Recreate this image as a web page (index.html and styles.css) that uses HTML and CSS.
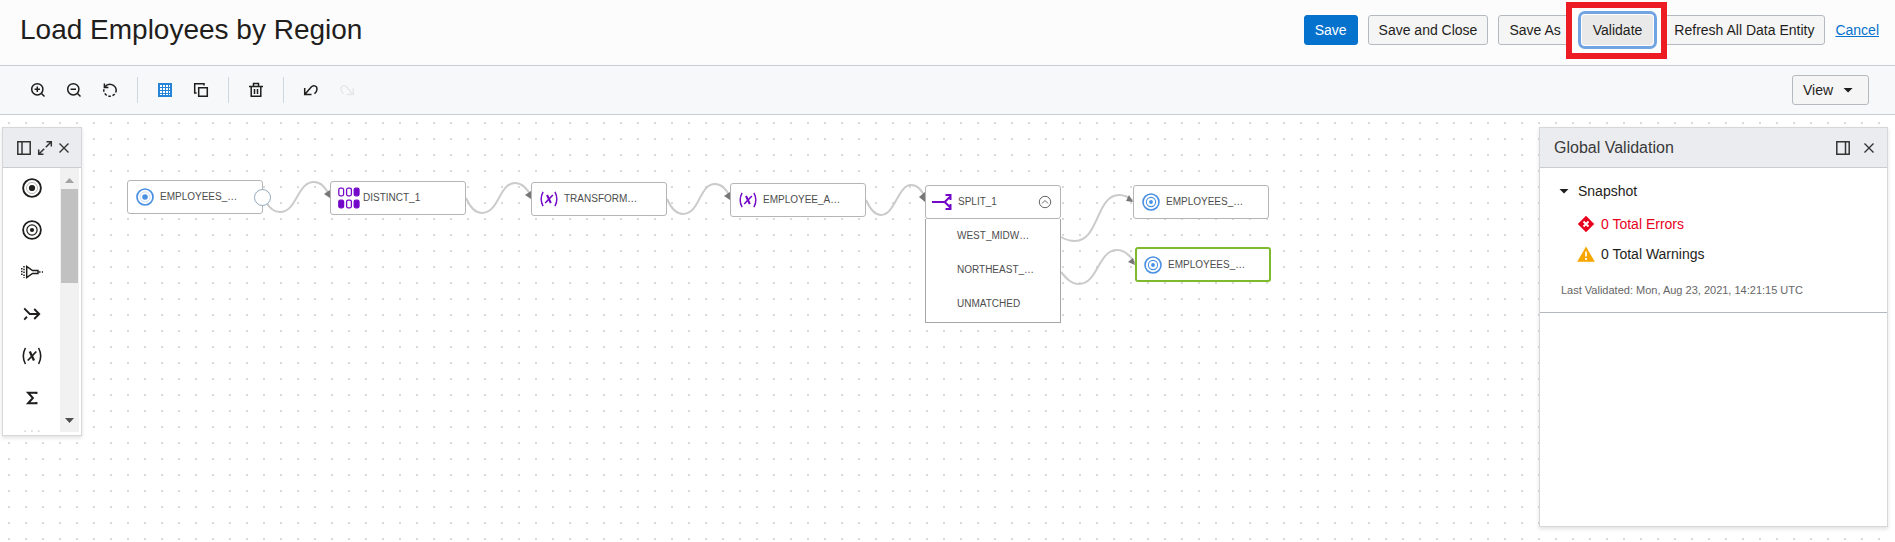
FILE: index.html
```html
<!DOCTYPE html>
<html lang="en">
<head>
<meta charset="utf-8">
<title>Load Employees by Region</title>
<link rel="stylesheet" href="styles.css">
</head>
<body>
<svg class="defs" aria-hidden="true">
  <symbol id="i-source" viewBox="0 0 18 18"><circle cx="9" cy="9" r="8" fill="none" stroke="currentColor" stroke-width="1.7"/><circle cx="9" cy="9" r="5" fill="none" stroke="currentColor" stroke-width=".7" opacity=".4"/><circle cx="9" cy="9" r="2.8" fill="currentColor"/></symbol>
  <symbol id="i-target" viewBox="0 0 18 18"><circle cx="9" cy="9" r="8" fill="none" stroke="currentColor" stroke-width="1.6"/><circle cx="9" cy="9" r="4.6" fill="none" stroke="currentColor" stroke-width="1.1"/><circle cx="9" cy="9" r="1.9" fill="currentColor"/></symbol>
  <symbol id="i-expr" viewBox="0 0 20 18"><g fill="none" stroke="currentColor"><path stroke-width="1.6" d="M3.400 1Q-.8 9 3.400 17M16.600 1Q20.800 9 16.600 17"/><path stroke-width="2.300" d="M7.800 4.500L12 13.500"/><path stroke-width="1.800" d="M14.300 4.500L5.800 13.500"/></g></symbol>
  <symbol id="i-close" viewBox="0 0 16 16"><path d="M3.500 3.500l9 9M12.500 3.500l-9 9" fill="none" stroke="currentColor" stroke-width="1.4"/></symbol>
</svg>

<header class="header">
  <h1 class="title">Load Employees by Region</h1>
  <div class="actions">
    <button class="btn primary" type="button">Save</button>
    <button class="btn" type="button">Save and Close</button>
    <button class="btn" type="button">Save As</button>
    <button class="btn focused" type="button">Validate</button>
    <button class="btn" type="button">Refresh All Data Entity</button>
    <a class="cancel" href="#">Cancel</a>
  </div>
</header>

<div class="toolbar" role="toolbar" aria-label="Designer tools">
  <div class="tools">
    <button class="tool" type="button" aria-label="Zoom in"><svg viewBox="0 0 16 16"><circle cx="7.3" cy="7.3" r="5.6"/><path d="M11.5 11.5l3 3M4.6 7.3h5.4M7.3 4.6v5.4"/></svg></button>
    <button class="tool" type="button" aria-label="Zoom out"><svg viewBox="0 0 16 16"><circle cx="7.3" cy="7.3" r="5.6"/><path d="M11.5 11.5l3 3M4.6 7.3h5.4"/></svg></button>
    <button class="tool" type="button" aria-label="Reset zoom"><svg viewBox="0 0 16 16"><path d="M3 5A6.2 6.2 0 0 1 14.2 8M2.4 1.4v4h4"/><path stroke-dasharray="2.6 1.7" d="M14.2 8A6.2 6.2 0 0 1 1.8 8V7"/></svg></button>
    <span class="divider"></span>
    <button class="tool active" type="button" aria-label="Grid"><svg viewBox="0 0 16 16"><path fill="#fff" stroke-width="2" d="M2 2h12v12H2z"/><path stroke-width="1" d="M5.500 2v12M8.500 2v12M11.500 2v12M2 5.500h12M2 8.500h12M2 11.500h12"/></svg></button>
    <button class="tool" type="button" aria-label="Copy"><svg viewBox="0 0 16 16"><path d="M5.7 5.7h8.6v8.6H5.7zM3.6 11H1.7V1.7H11v1.9"/></svg></button>
    <span class="divider"></span>
    <button class="tool" type="button" aria-label="Delete"><svg viewBox="0 0 16 16"><path d="M1 4.5h14M5.5 4.5v-3h5v3M3.2 4.5v9.8h9.6V4.5M6.5 7v5M9.5 7v5"/></svg></button>
    <span class="divider"></span>
    <button class="tool" type="button" aria-label="Undo"><svg viewBox="0 0 16 16"><path d="M1.700 6v6.500H8.500M2 12.200L8 5.300C10 3 14 3.200 14 7.200C14 9.200 13 10.300 11.500 11.800"/></svg></button>
    <button class="tool" type="button" aria-label="Redo" disabled><svg viewBox="0 0 16 16"><path d="M14.300 6v6.500H7.500M14 12.200L8 5.300C6 3 2 3.200 2 7.200C2 9.200 3 10.300 4.500 11.800"/></svg></button>
  </div>
  <button class="btn view" type="button">View <span class="caret"></span></button>
</div>

<main class="canvas">
  <svg class="edges" aria-hidden="true">
    <g class="wires">
      <path d="M266 87C270 94 275 97 280 97C297 97 297 67 314 67C321 67 325 72 329 79"/>
      <path d="M466 83C470 92 475 98 482 98C499 98 499 68 515 68C522 68 526 73 531 80"/>
      <path d="M667 84C671 93 676 99 683 99C700 99 699 69 715 69C722 69 726 74 730 81"/>
      <path d="M866 85C870 94 875 100 881 100C895 100 898 70 911 70C917 70 922 75 925 83"/>
      <path d="M1061 122C1066 125 1071 126 1075 126C1099 126 1096 80 1119 80C1124 80 1129 82 1133 86"/>
      <path d="M1061 157C1066 163 1071 169 1079 169C1098 169 1098 135 1117 135C1124 135 1130 140 1135 148"/>
    </g>
    <g class="heads">
      <path d="M324 79l6-4v8z"/><path d="M525 80l6-4v8z"/><path d="M724 81l6-4v8z"/><path d="M919 82l6-5v10z"/><path d="M1126 86l3-6 4 7z"/><path d="M1128 147l5-4 2 7z"/>
    </g>
  </svg>

  <div class="node n1"><svg class="ico blue"><use href="#i-source"/></svg><span>EMPLOYEES_…</span><i class="port"></i></div>
  <div class="node n2"><svg class="ico wide" viewBox="0 0 22 22"><g fill="none" stroke="currentColor" stroke-width="1.300"><rect x=".8" y="1.200" width="4.800" height="7.600" rx="1.500"/><rect x="8.600" y="1.200" width="4.800" height="7.600" rx="1.500"/><rect x="16.200" y="1.200" width="4.800" height="7.600" rx="1.500" fill="currentColor"/><rect x=".8" y="13.200" width="4.800" height="7.600" rx="1.500" fill="currentColor"/><rect x="8.600" y="13.200" width="4.800" height="7.600" rx="1.500"/><rect x="16.200" y="13.200" width="4.800" height="7.600" rx="1.500" fill="currentColor"/></g></svg><span>DISTINCT_1</span></div>
  <div class="node n3"><svg class="ico"><use href="#i-expr"/></svg><span>TRANSFORM…</span></div>
  <div class="node n4"><svg class="ico"><use href="#i-expr"/></svg><span>EMPLOYEE_A…</span></div>
  <div class="split">
    <div class="node"><svg class="ico split-ico" viewBox="0 0 20 18"><path d="M0 9h11M11 9l2-.2 5-5M11 9l2 .2 5 5M13.500 2h5v5M13.500 16h5v-5" fill="none" stroke="currentColor" stroke-width="2"/></svg><span>SPLIT_1</span>
      <button class="collapse" type="button" aria-label="Collapse"><svg viewBox="0 0 14 14"><circle cx="7" cy="7" r="5.700"/><path d="M4 8.500l3-3 3 3"/></svg></button></div>
    <ul class="outputs"><li>WEST_MIDW…</li><li>NORTHEAST_…</li><li>UNMATCHED</li></ul>
  </div>
  <div class="node n6"><svg class="ico blue"><use href="#i-target"/></svg><span>EMPLOYEES_…</span></div>
  <div class="node n7 selected"><svg class="ico blue"><use href="#i-target"/></svg><span>EMPLOYEES_…</span></div>

  <aside class="panel palette" aria-label="Operators">
    <div class="panel-head">
      <button class="icon-btn" type="button" aria-label="Dock left"><svg viewBox="0 0 16 16"><path d="M1.800 1.800h12.400v12.400H1.800zM6 2v12"/></svg></button>
      <button class="icon-btn" type="button" aria-label="Expand"><svg viewBox="0 0 16 16"><path d="M9.500 1.700h4.800v4.800M14 2L8.800 7.200M6.500 14.300H1.700V9.500M2 14l5.200-5.200"/></svg></button>
      <button class="icon-btn" type="button" aria-label="Close"><svg><use href="#i-close"/></svg></button>
    </div>
    <div class="palette-body">
      <ul class="operators">
        <li><svg><use href="#i-source"/></svg></li>
        <li><svg><use href="#i-target"/></svg></li>
        <li><svg class="op-wide" viewBox="0 0 22 18"><g fill="none" stroke="currentColor" stroke-width="1.500"><path d="M5.700 3.500v11L11.500 10.500h5.500V7.500H11.500z"/><path stroke-dasharray="1.500 1.300" d="M3 3v12M.8 5v8M18 9h4"/></g></svg></li>
        <li><svg viewBox="0 0 18 18"><path d="M2 4l5 5h8M2 14l2.500-2.500M11 4.500L15.500 9 11 13.500" fill="none" stroke="currentColor" stroke-width="1.700"/></svg></li>
        <li><svg><use href="#i-expr"/></svg></li>
        <li><svg viewBox="0 0 18 18"><path d="M13 5.500V4.300H5.500L9.800 9l-4.300 4.700H13v-1.200" fill="none" stroke="currentColor" stroke-width="1.800"/></svg></li>
        <li><svg viewBox="0 0 18 18"><path d="M2 1h14" fill="none" stroke="#ccc" stroke-width="1" stroke-dasharray="1.500 4.700"/></svg></li>
      </ul>
      <div class="scrollbar"><i class="up"></i><i class="thumb"></i><i class="down"></i></div>
    </div>
  </aside>

  <aside class="panel validation" aria-labelledby="gv">
    <div class="panel-head">
      <h2 id="gv">Global Validation</h2>
      <button class="icon-btn" type="button" aria-label="Dock right"><svg viewBox="0 0 16 16"><path d="M1.800 1.800h12.400v12.400H1.800zM10.500 2v12"/></svg></button>
      <button class="icon-btn" type="button" aria-label="Close"><svg><use href="#i-close"/></svg></button>
    </div>
    <section class="summary">
      <button class="snapshot" type="button"><span class="caret"></span>Snapshot</button>
      <p class="result errors"><svg viewBox="0 0 18 18"><path fill="#e8001d" d="M9 .8L17.200 9 9 17.200.8 9z"/><path d="M6.500 6.500l5 5M11.500 6.500l-5 5" stroke="#fff" stroke-width="1.800"/></svg>0 Total Errors</p>
      <p class="result"><svg viewBox="0 0 18 18"><path fill="#f7a600" d="M9 1.500L17.800 16.800H.2z"/><path d="M9 6.500v5M9 13v2" stroke="#fff" stroke-width="1.700"/></svg>0 Total Warnings</p>
      <p class="stamp">Last Validated: Mon, Aug 23, 2021, 14:21:15 UTC</p>
    </section>
  </aside>
</main>
</body>
</html>
```
FILE: styles.css
```css
* { box-sizing: border-box; }
body {
  margin: 0;
  min-height: 100vh;
  display: flex;
  flex-direction: column;
  font: 14px/20px "Liberation Sans", Arial, sans-serif;
  color: #1f1e1c;
  background: #fff;
}
button { font: inherit; color: inherit; cursor: pointer; }
h1, h2, p, ul { margin: 0; padding: 0; font-weight: 400; list-style: none; }
.defs { position: absolute; width: 0; height: 0; }

.header {
  display: flex;
  align-items: center;
  justify-content: space-between;
  padding: 12px 16px 17px 20px;
  background: #fcfcfc;
  border-bottom: 1px solid #c9cdd2;
}
.title { font-size: 28px; line-height: 36px; }
.actions { display: flex; align-items: center; gap: 10px; }
.btn {
  height: 30px;
  padding: 0 10px;
  border: 1px solid #b5bac0;
  border-radius: 3px;
  background: #f5f5f5;
  white-space: nowrap;
}
.primary { background: #0572ce; border-color: #0572ce; color: #fff; }
.focused {
  position: relative;
  background: #e9e9e9;
  border-color: #e9e9e9;
  box-shadow: 0 0 0 1px #fff, 0 0 0 4px #73a4e2;
}
.focused::after {
  content: "";
  position: absolute;
  inset: -14px -15px -15px -17px;
  border: 6px solid #ed1c24;
}
.cancel { color: #0572ce; }

.toolbar {
  display: flex;
  align-items: center;
  justify-content: space-between;
  padding: 9px 26px 9px 20px;
  background: #f7f8fa;
  border-bottom: 1px solid #c9cdd2;
}
.tools { display: flex; align-items: center; }
.tool {
  display: grid;
  place-items: center;
  width: 36px;
  height: 30px;
  padding: 0;
  border: 0;
  background: none;
}
.tool svg, .icon-btn svg {
  width: 16px;
  height: 16px;
  fill: none;
  stroke: currentColor;
  stroke-width: 1.5;
}
.tool.active { color: #2584d6; }
.tool:disabled { color: #e6e7e9; }
.divider { width: 1px; height: 26px; margin: 0 9px; background: #cfd7de; }
.view { display: flex; align-items: center; gap: 10px; width: 77px; }
.caret {
  width: 10px;
  height: 5px;
  background: #1f1e1c;
  clip-path: polygon(0 0, 100% 0, 50% 100%);
}

.canvas {
  position: relative;
  flex: 1;
  min-height: 360px;
  overflow: hidden;
  background: conic-gradient(from 90deg at 15px 14px, #d9d9d9 90deg, transparent 0) -7px -7px / 17px 16px #fff;
}
.edges { position: absolute; inset: 0; width: 100%; height: 100%; }
.wires { fill: none; stroke: #cbcbcb; stroke-width: 2; }
.heads { fill: #777; }

.node {
  display: flex;
  align-items: center;
  gap: 6px;
  width: 136px;
  height: 34px;
  padding: 0 8px;
  border: 1px solid #b5b5b5;
  border-radius: 3px;
  background: #fff;
  font-size: 10px;
  color: #4d4d4d;
}
.canvas > .node, .split { position: absolute; }
.n1 { left: 127px; top: 65px; }
.n2 { left: 330px; top: 66px; }
.n3 { left: 531px; top: 67px; }
.n4 { left: 730px; top: 68px; }
.split { left: 925px; top: 70px; }
.n6 { left: 1133px; top: 70px; }
.node.n7 { left: 1135px; top: 132px; height: 35px; }
.selected { border: 2px solid #7fb92c; padding: 0 7px; }
.ico { width: 18px; height: 18px; color: #7408c8; }
.ico.blue { color: #4a90e2; }
.ico.wide { width: 22px; height: 22px; margin: 0 -3px 0 -1px; }
.split-ico { width: 20px; margin-left: -2px; }
.port {
  position: absolute;
  right: -9px;
  top: 8px;
  width: 17px;
  height: 17px;
  border: 1px solid #8fa8bd;
  border-radius: 50%;
  background: #fff;
}
.collapse {
  margin-left: auto;
  padding: 0;
  border: 0;
  background: none;
  line-height: 0;
}
.collapse svg { width: 14px; height: 14px; fill: none; stroke: #666; }
.outputs {
  padding: 0 0 1px 31px;
  border: 1px solid #a6a6a6;
  border-top: 0;
  background: #fff;
  font-size: 10px;
  line-height: 34px;
  color: #4d4d4d;
}

.panel {
  position: absolute;
  border: 1px solid #d6d7d9;
  background: #fff;
  box-shadow: 0 2px 4px rgba(0, 0, 0, .12);
}
.panel-head {
  display: flex;
  align-items: center;
  height: 40px;
  background: #ebecf0;
  border-bottom: 1px solid #c9cdd2;
}
.icon-btn { padding: 0; border: 0; background: none; line-height: 0; color: #333; }
.palette { left: 2px; top: 12px; width: 80px; }
.palette .panel-head { gap: 5px; padding-left: 13px; }
.palette .icon-btn:last-child { margin-left: -2px; }
.palette-body { display: flex; height: 267px; padding: 0 2px 3px 0; }
.operators { flex: 1; overflow: hidden; }
.operators li { display: grid; place-items: center; height: 42px; padding-bottom: 2px; }
.operators svg { width: 20px; height: 20px; }
.operators .op-wide { width: 22px; }
.scrollbar {
  display: flex;
  flex-direction: column;
  align-items: center;
  width: 19px;
  padding: 10px 0 9px;
  background: #f1f1f1;
}
.up, .down { width: 9px; height: 5px; }
.up { background: #a3a3a3; clip-path: polygon(50% 0, 100% 100%, 0 100%); }
.down { margin-top: auto; background: #505050; clip-path: polygon(0 0, 100% 0, 50% 100%); }
.thumb { width: 17px; height: 94px; margin-top: 6px; background: #c1c1c1; }

.validation { right: 7px; top: 12px; bottom: 15px; width: 349px; }
.validation .panel-head { gap: 10px; padding: 0 10px 0 14px; }
.validation h2 { flex: 1; font-size: 16px; color: #3a3a3a; }
.summary { padding: 13px 18px 12px 19px; border-bottom: 1px solid #b4b8bf; }
.snapshot { display: flex; align-items: center; gap: 9px; padding: 0; border: 0; background: none; }
.result { display: flex; align-items: center; gap: 6px; height: 30px; padding-left: 18px; }
.errors { margin-top: 8px; color: #e8001d; }
.result svg { width: 18px; height: 18px; }
.stamp { margin-top: 11px; padding-left: 2px; font-size: 11px; color: #666; }
```
